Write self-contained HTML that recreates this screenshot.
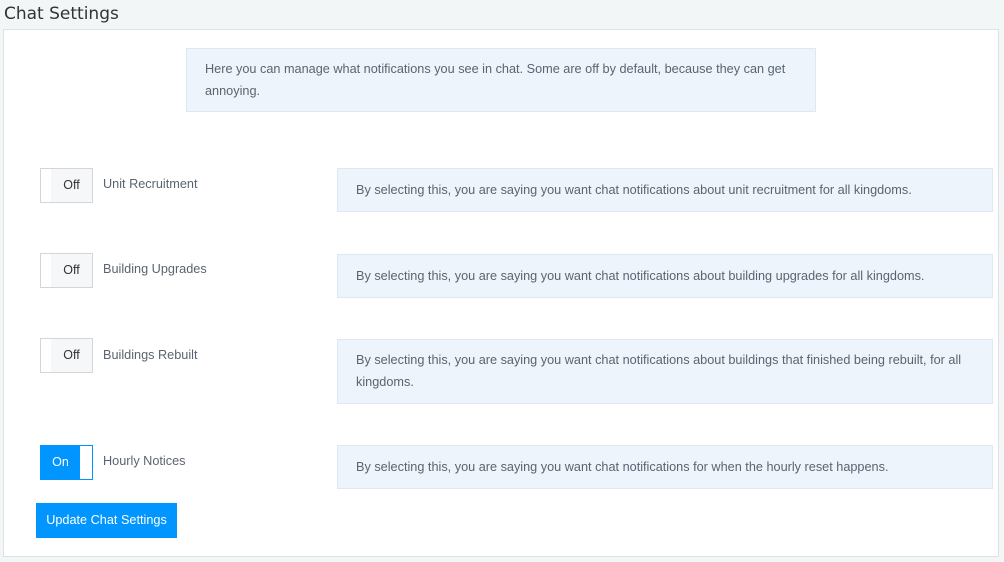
<!DOCTYPE html>
<html><head><style>
body{margin:0;width:1004px;height:562px;background:#f2f6f7;font-family:"Liberation Sans",sans-serif;position:relative;overflow:hidden}
.a{position:absolute}
h1{position:absolute;left:4px;top:4px;margin:0;font-weight:normal;font-size:17px;color:#333;font-family:"DejaVu Sans",sans-serif}
.card{left:3px;top:29px;width:994px;height:526px;background:#fff;border:1px solid #dde2e4}
.info{background:#edf4fb;border:1px solid #dde8f2;color:#5a6470;font-size:12.7px;line-height:22px;box-sizing:border-box}
.tg{width:53px;height:35px;box-sizing:border-box;border:1px solid #d2d6da;background:#fff}
.tg .k{position:absolute;left:10px;top:0;right:0;bottom:0;background:#f5f7f9;font-size:12.5px;color:#333;text-align:center;line-height:33px}
.lab{font-size:12.7px;color:#5a6470}
.on{border:1px solid #0095ff}
.on .k{left:0;right:12px;background:#0095ff;color:#fff}
.btn{left:36px;top:503px;width:141px;height:35px;background:#0095ff;color:#fff;font-size:12.7px;text-align:center;line-height:35px}
</style></head><body>
<h1>Chat Settings</h1>
<div class="a card"></div>
<div class="a info" style="left:186px;top:48px;width:630px;height:64px;padding:9px 18px">Here you can manage what notifications you see in chat. Some are off by default, because they can get annoying.</div>

<div class="a tg" style="left:40px;top:168px"><div class="k a">Off</div></div>
<div class="a lab" style="left:103px;top:177px">Unit Recruitment</div>
<div class="a info" style="left:337px;top:168px;width:656px;height:44px;padding:10px 18px">By selecting this, you are saying you want chat notifications about unit recruitment for all kingdoms.</div>

<div class="a tg" style="left:40px;top:253px"><div class="k a">Off</div></div>
<div class="a lab" style="left:103px;top:262px">Building Upgrades</div>
<div class="a info" style="left:337px;top:254px;width:656px;height:44px;padding:10px 18px">By selecting this, you are saying you want chat notifications about building upgrades for all kingdoms.</div>

<div class="a tg" style="left:40px;top:338px"><div class="k a">Off</div></div>
<div class="a lab" style="left:103px;top:348px">Buildings Rebuilt</div>
<div class="a info" style="left:337px;top:339px;width:656px;height:65px;padding:9px 18px">By selecting this, you are saying you want chat notifications about buildings that finished being rebuilt, for all kingdoms.</div>

<div class="a tg on" style="left:40px;top:445px"><div class="k a">On</div></div>
<div class="a lab" style="left:103px;top:454px">Hourly Notices</div>
<div class="a info" style="left:337px;top:445px;width:656px;height:44px;padding:10px 18px">By selecting this, you are saying you want chat notifications for when the hourly reset happens.</div>

<div class="a btn">Update Chat Settings</div>
</body></html>
